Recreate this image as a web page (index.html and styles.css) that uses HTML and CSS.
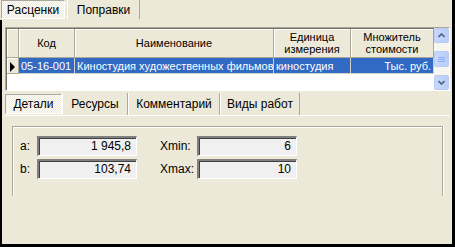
FILE: index.html
```html
<!DOCTYPE html>
<html lang="ru">
<head>
    <meta charset="UTF-8">
    <title>Расценки</title>
    <link rel="stylesheet" href="styles.css">
</head>
<body>
<div class="window">
    <!-- top button tabs -->
    <div class="tabs top-tabs">
        <div class="tab pressed tab-rates">Расценки</div>
        <div class="tab tab-corr">Поправки</div>
    </div>

    <div class="content">
        <!-- rates grid -->
        <div class="grid">
            <table class="grid-table">
                <colgroup>
                    <col style="width:12px">
                    <col style="width:56px">
                    <col style="width:199px">
                    <col style="width:77px">
                    <col style="width:83px">
                </colgroup>
                <thead>
                    <tr>
                        <th class="ind"></th>
                        <th>Код</th>
                        <th>Наименование</th>
                        <th>Единица<br>измерения</th>
                        <th>Множитель<br>стоимости</th>
                    </tr>
                </thead>
                <tbody>
                    <tr class="selected">
                        <td class="ind"><span class="arrow"></span></td>
                        <td>05-16-001</td>
                        <td class="clip">Киностудия художественных фильмов</td>
                        <td class="clip">киностудия</td>
                        <td class="num">Тыс. руб.</td>
                    </tr>
                </tbody>
            </table>
            <div class="scrollbar">
                <div class="sb-btn">
                    <svg width="7" height="5" viewBox="0 0 7 5"><path d="M0.5 4 L3.5 1 L6.5 4" fill="none" stroke="#4D6185" stroke-width="1.6"/></svg>
                </div>
                <div class="sb-thumb">
                    <svg width="7" height="7" viewBox="0 0 7 7"><path d="M0 1.5H7M0 3.5H7M0 5.5H7" stroke="#8CB0F8" stroke-width="1"/></svg>
                </div>
                <div class="sb-btn">
                    <svg width="7" height="5" viewBox="0 0 7 5"><path d="M0.5 1 L3.5 4 L6.5 1" fill="none" stroke="#4D6185" stroke-width="1.6"/></svg>
                </div>
            </div>
        </div>

        <!-- detail tabs -->
        <div class="tabs sub-tabs">
            <div class="tab pressed tab-details">Детали</div>
            <div class="tab tab-res">Ресурсы</div>
            <div class="tab tab-comm">Комментарий</div>
            <div class="tab tab-works">Виды работ</div>
        </div>

        <div class="panel">
            <div class="group">
                <div class="fields">
                    <label>a:</label>
                    <div class="field">1 945,8</div>
                    <label class="xlabel">Xmin:</label>
                    <div class="field">6</div>
                    <label>b:</label>
                    <div class="field">103,74</div>
                    <label class="xlabel">Xmax:</label>
                    <div class="field">10</div>
                </div>
            </div>
        </div>
    </div>
</div>
</body>
</html>
```

FILE: styles.css
```css
body {
    margin: 0;
    font-family: "Liberation Sans", Arial, sans-serif;
    font-size: 11px;
    color: #000;
}
.window {
    width: 455px;
    height: 247px;
    box-sizing: border-box;
    border-right: 3px solid #000;
    border-bottom: 3px solid #000;
    background: #ECE9D8;
    overflow: hidden;
}

/* button style tabs */
.tabs {
    display: flex;
}
.tab {
    box-sizing: border-box;
    display: flex;
    align-items: center;
    justify-content: center;
    border-left: 1px solid #fff;
    border-right: 1px solid #ACA899;
}
.tab.pressed {
    border-top: 1px solid #ACA899;
    border-left: 1px solid #ACA899;
    border-right: 1px solid #fff;
    border-bottom: 1px solid #fff;
    background-color: #fff;
    background-image: repeating-conic-gradient(#ECE9D8 0 25%, #fff 0 50%);
    background-size: 2px 2px;
}
.top-tabs {
    height: 20px;
    padding-left: 1px;
}
.top-tabs .tab {
    height: 19px;
    font-size: 12px;
}
.tab-rates { width: 64px; }
.tab-corr { width: 73px; margin-left: 2px; }

.content {
    height: 224px;
    box-sizing: border-box;
    border-left: 2px solid #000;
    padding: 7px 2px 0 3px;
}

/* grid */
.grid {
    height: 64px;
    box-sizing: border-box;
    display: flex;
    background: #fff;
    border-top: 1px solid #ACA899;
    border-left: 1px solid #ACA899;
    border-right: 1px solid #fff;
    border-bottom: 1px solid #fff;
    box-shadow: inset 1px 1px 0 #716F64;
}
.grid-table {
    table-layout: fixed;
    border-collapse: separate;
    border-spacing: 0;
    width: 427px;
    align-self: flex-start;
    margin: 1px 0 0 1px;
}
.grid-table th {
    height: 29px;
    box-sizing: border-box;
    padding: 0;
    font-weight: normal;
    line-height: 12px;
    background: #ECE9D8;
    border-right: 1px solid #ACA899;
    border-bottom: 1px solid #ACA899;
    box-shadow: inset 1px 1px 0 #fff;
    text-align: center;
}
.grid-table td {
    height: 16px;
    box-sizing: border-box;
    padding: 0 2px;
    white-space: nowrap;
    overflow: hidden;
    background: #316AC5;
    color: #fff;
    border-right: 1px solid #D4D0C8;
    border-bottom: 1px solid #D4D0C8;
}
.grid-table td.clip {
    text-overflow: clip;
}
.grid-table td.num {
    text-align: right;
}
.grid-table td.ind {
    background: #ECE9D8;
    border-right: 1px solid #ACA899;
    border-bottom: 1px solid #ACA899;
    box-shadow: inset 1px 1px 0 #fff;
    padding: 0;
    text-align: center;
}
.arrow {
    display: inline-block;
    width: 0;
    height: 0;
    border-top: 5px solid transparent;
    border-bottom: 5px solid transparent;
    border-left: 5px solid #000;
    vertical-align: middle;
}

/* xp scrollbar */
.scrollbar {
    width: 16px;
    margin-left: auto;
    display: flex;
    flex-direction: column;
    justify-content: space-between;
    background: #F7F6F1;
}
.sb-btn, .sb-thumb {
    height: 15px;
    box-sizing: border-box;
    border: 1px solid #B7CAF5;
    border-radius: 2px;
    background: linear-gradient(to right, #C9D8FC, #B9CDF7);
    display: flex;
    align-items: center;
    justify-content: center;
}
.sb-thumb {
    height: 16px;
}

/* lower tabs */
.sub-tabs {
    height: 22px;
    margin-top: 2px;
}
.sub-tabs .tab {
    height: 22px;
    font-size: 12px;
}
.tab-details { width: 57px; height: 20px !important; margin-top: 1px; }
.tab-res { width: 66px; }
.tab-comm { width: 92px; }
.tab-works { width: 80px; }

.panel {
    height: 70px;
    overflow: hidden;
    border-top: 1px solid #fff;
    padding: 10px 0 0 7px;
}
.group {
    width: 431px;
    height: 120px;
    box-sizing: border-box;
    border-top: 1px solid #ACA899;
    border-left: 1px solid #ACA899;
    border-right: 1px solid #ACA899;
    box-shadow: inset 1px 1px 0 #fff, 1px 0 0 #fff;
    padding: 9px 0 0 7px;
}
.fields {
    display: grid;
    grid-template-columns: 17px 100px 23px 37px 100px;
    grid-auto-rows: 20px;
    row-gap: 3px;
    align-items: center;
}
.fields label {
    font-size: 12px;
}
.xlabel {
    grid-column: 4;
}
.field {
    height: 20px;
    box-sizing: border-box;
    border-top: 2px solid #808080;
    border-left: 2px solid #808080;
    border-right: 1px solid #fff;
    border-bottom: 1px solid #fff;
    box-shadow: inset 1px 1px 0 #404040;
    background: #F0F0F0;
    text-align: right;
    padding-right: 5px;
    line-height: 17px;
    font-size: 12px;
}
```
